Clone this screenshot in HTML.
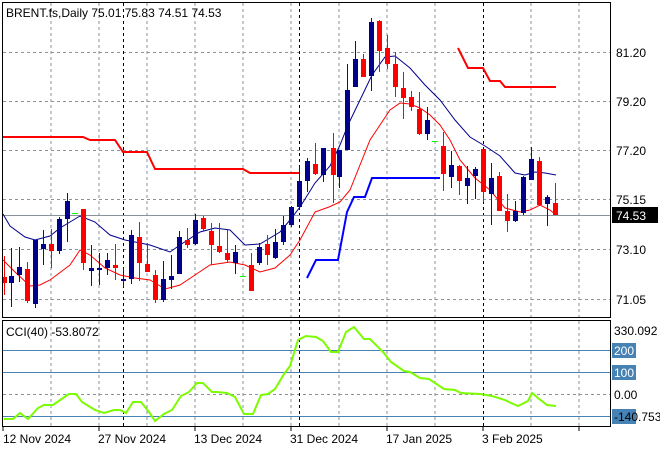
<!DOCTYPE html>
<html><head><meta charset="utf-8"><style>
html,body{margin:0;padding:0;background:#fff;}
svg{display:block;font-family:"Liberation Sans",sans-serif;}
</style></head><body>
<svg id="s" width="660" height="450" viewBox="0 0 660 450" xmlns="http://www.w3.org/2000/svg">
<rect width="660" height="450" fill="#fff"/>
<g stroke="#8a939c" stroke-width="1" stroke-dasharray="3,3" fill="none">
<path d="M51 3V317M99 3V317M147 3V317M195 3V317M243 3V317M291 3V317M339 3V317M387 3V317M435 3V317M531 3V317M579 3V317"/>
<path d="M3 52.5H610M3 101.5H610M3 150.5H610M3 199.5H610M3 249.5H610M3 299.5H610"/>
<path d="M51 321V426M99 321V426M147 321V426M195 321V426M243 321V426M291 321V426M339 321V426M387 321V426M435 321V426M531 321V426M579 321V426"/>
<path d="M3 394.5H610"/>
</g>
<g stroke="#000" stroke-width="1" stroke-dasharray="3,3" fill="none">
<path d="M123.5 3V317M299.5 3V317M483.5 3V317M123.5 321V426M299.5 321V426M483.5 321V426"/>
</g>
<path d="M3 215.5H610" stroke="#8a939c" stroke-width="1"/>
<path d="M3 137H83L90 140H115L123 152H147L155 169H243L250 173H299" stroke="#f00" stroke-width="2" fill="none"/>
<path d="M458 48L468 68H483L490 81H500L505 87H556" stroke="#f00" stroke-width="2" fill="none"/>
<path d="M307 278L316 260H338L347 212L354 197H365L372 178H440" stroke="#0000ff" stroke-width="2" fill="none"/>
<polyline fill="none" stroke="#00008b" stroke-width="1" points="3,214 10,226 25,237 35,240 50,236 60,228 70,222 80,216 95,222 110,235 125,240 150,245 170,252 180,245 200,232 215,228 230,230 245,245 260,244 280,232 290,220 300,207 315,183 330,166 340,145 348,125 360,100 372,75 385,57 395,56 410,68 425,85 440,100 455,120 470,137 485,146 500,156 515,173 525,175 535,172 545,173 556,175"/>
<polyline fill="none" stroke="#f00" stroke-width="1" points="3,260 15,272 30,286 40,285 50,280 70,265 80,250 90,255 105,268 120,275 135,278 150,280 165,289 180,285 195,275 210,265 230,262 245,265 260,272 275,268 290,255 300,240 315,212 329,207 340,202 350,190 360,165 370,140 380,125 390,110 400,103 410,104 420,108 430,115 440,125 450,140 460,160 475,178 490,190 505,208 520,212 530,210 540,205 550,210 556,215"/>
<g id="c"></g>
<rect x="2.5" y="2.5" width="608" height="315" fill="none" stroke="#000"/>
<text x="6" y="17" font-size="12" fill="#000">BRENT.fs,Daily  75.01 75.83 74.51 74.53</text>
<g font-size="12" fill="#000">
<text x="616" y="57">81.20</text><text x="616" y="106">79.20</text><text x="616" y="155">77.20</text>
<text x="616" y="204">75.15</text><text x="616" y="254">73.10</text><text x="616" y="304">71.05</text>
</g>
<rect x="612" y="207" width="46" height="16" fill="#000"/>
<text x="616" y="220" font-size="12" fill="#fff">74.53</text>
<!-- CCI -->
<g stroke="#4682b4" stroke-width="1"><path d="M3 350.5H610M3 372.5H610M3 416.5H610"/></g>
<polyline fill="none" stroke="#7cfc00" stroke-width="2" points="4,419 13,419 20,413 28,419 38,408 44,405 53,405 63,398 69,394 76,394 82,402 95,410 104,413 114,410 120,410 126,413 133,402 141,402 149,412 155,421 164,414 172,410 181,396 189,392 197,383 203,383 212,392 217,392 227,393 235,397 244,414 253,414 261,395 268,394 275,389 284,374 290,366 298,340 306,336 316,337 323,341 331,352 338,352 346,332 354,327 364,339 370,339 383,352 391,362 404,371 410,372 420,378 429,379 444,389 455,390 461,393 480,394 492,396 505,400 511,403 518,406 528,401 532,393 538,398 547,405 556,406"/>
<rect x="2.5" y="320.5" width="608" height="106" fill="none" stroke="#000"/>
<text x="6" y="336" font-size="12" fill="#000">CCI(40) -53.8072</text>
<g font-size="12">
<text x="614" y="335" fill="#000">330.092</text>
<rect x="612" y="343" width="24" height="15" fill="#4682b4"/><text x="614" y="355" fill="#fff">200</text>
<rect x="612" y="365" width="24" height="15" fill="#4682b4"/><text x="614" y="377" fill="#fff">100</text>
<text x="614" y="399" fill="#000">0.00</text>
<rect x="612" y="409" width="24" height="15" fill="#4682b4"/><text x="614" y="421" fill="#000">-140.753</text>
</g>
<g stroke="#000"><path d="M3 426V431M99 426V431M195 426V431M291 426V431M387 426V431M483 426V431M579 426V431"/></g>
<g font-size="12" fill="#000">
<text x="3" y="443">12 Nov 2024</text><text x="98" y="443">27 Nov 2024</text><text x="194" y="443">13 Dec 2024</text>
<text x="290" y="443">31 Dec 2024</text><text x="386" y="443">17 Jan 2025</text><text x="482" y="443">3 Feb 2025</text>
</g>
</svg>
<script>
var d=[[4,'r',277,283,256,295],[11,'b',276,283,248,307],[19,'b',267,275,247,282],[27,'r',269,301,262,303],[35,'b',240,304,240,308],[43,'b',244,249,230,265],[51,'r',244,251,229,268],[59,'b',219,251,217,254],[67,'b',201,219,193,242],[75,'g',213,213,213,213],[83,'r',209,263,209,270],[91,'b',268,271,245,286],[99,'b',268,270,253,285],[107,'b',260,268,253,275],[115,'r',265,268,244,280],[123,'b',279,281,268,287],[131,'b',235,279,230,284],[139,'r',237,263,222,281],[147,'r',264,272,243,272],[155,'r',275,300,270,303],[163,'b',279,300,261,302],[171,'b',276,280,255,289],[179,'b',237,274,231,274],[187,'r',240,245,228,248],[195,'b',220,244,214,245],[203,'r',218,229,216,231],[211,'r',231,245,223,265],[219,'r',246,252,223,253],[227,'r',253,260,230,262],[235,'b',252,263,245,274],[243,'g',276,276,276,276],[251,'r',265,291,253,291],[259,'b',247,263,243,265],[267,'r',244,255,235,265],[275,'b',242,258,229,259],[283,'b',225,242,216,245],[291,'b',207,225,206,227],[299,'b',181,207,167,208],[307,'b',161,181,158,192],[315,'r',164,174,143,175],[323,'b',148,175,148,182],[333,'r',148,175,133,203],[339,'b',150,177,150,188],[347,'b',90,150,64,150],[355,'b',59,87,41,87],[363,'r',59,77,54,77],[371,'b',22,76,18,91],[379,'r',21,51,20,72],[387,'r',48,64,35,69],[395,'r',64,87,52,97],[403,'r',88,98,72,119],[411,'r',97,107,91,111],[419,'r',109,134,92,135],[427,'b',120,134,107,140],[435,'g',141,141,141,141],[443,'r',146,174,132,191],[451,'b',165,177,151,188],[459,'r',166,181,165,195],[467,'b',178,186,166,204],[475,'b',169,176,167,199],[483,'r',149,192,149,202],[491,'b',178,194,163,225],[499,'r',176,211,172,211],[507,'r',211,221,194,232],[515,'b',211,221,201,222],[523,'b',177,213,176,215],[531,'b',159,180,147,180],[539,'r',161,205,157,206],[547,'b',197,204,195,226],[555,'r',203,215,183,215]];
var h='';d.forEach(function(c){var col=c[1]=='r'?'#f00':c[1]=='b'?'#00008b':'#0f0';
if(c[1]=='g'){h+='<path d="M'+(c[0]-3)+' '+(c[2]+.5)+'h6" stroke="#0f0"/>';return;}
var wc=c[1]=='r'?'#f00':'#0000ff';
h+='<path d="M'+(c[0]+.5)+' '+c[4]+'V'+c[5]+'" stroke="'+wc+'"/>';
h+='<rect x="'+(c[0]-2)+'" y="'+c[2]+'" width="5" height="'+Math.max(1,c[3]-c[2])+'" fill="'+col+'"/>';});
document.getElementById('c').innerHTML=h;
</script>
</body></html>
